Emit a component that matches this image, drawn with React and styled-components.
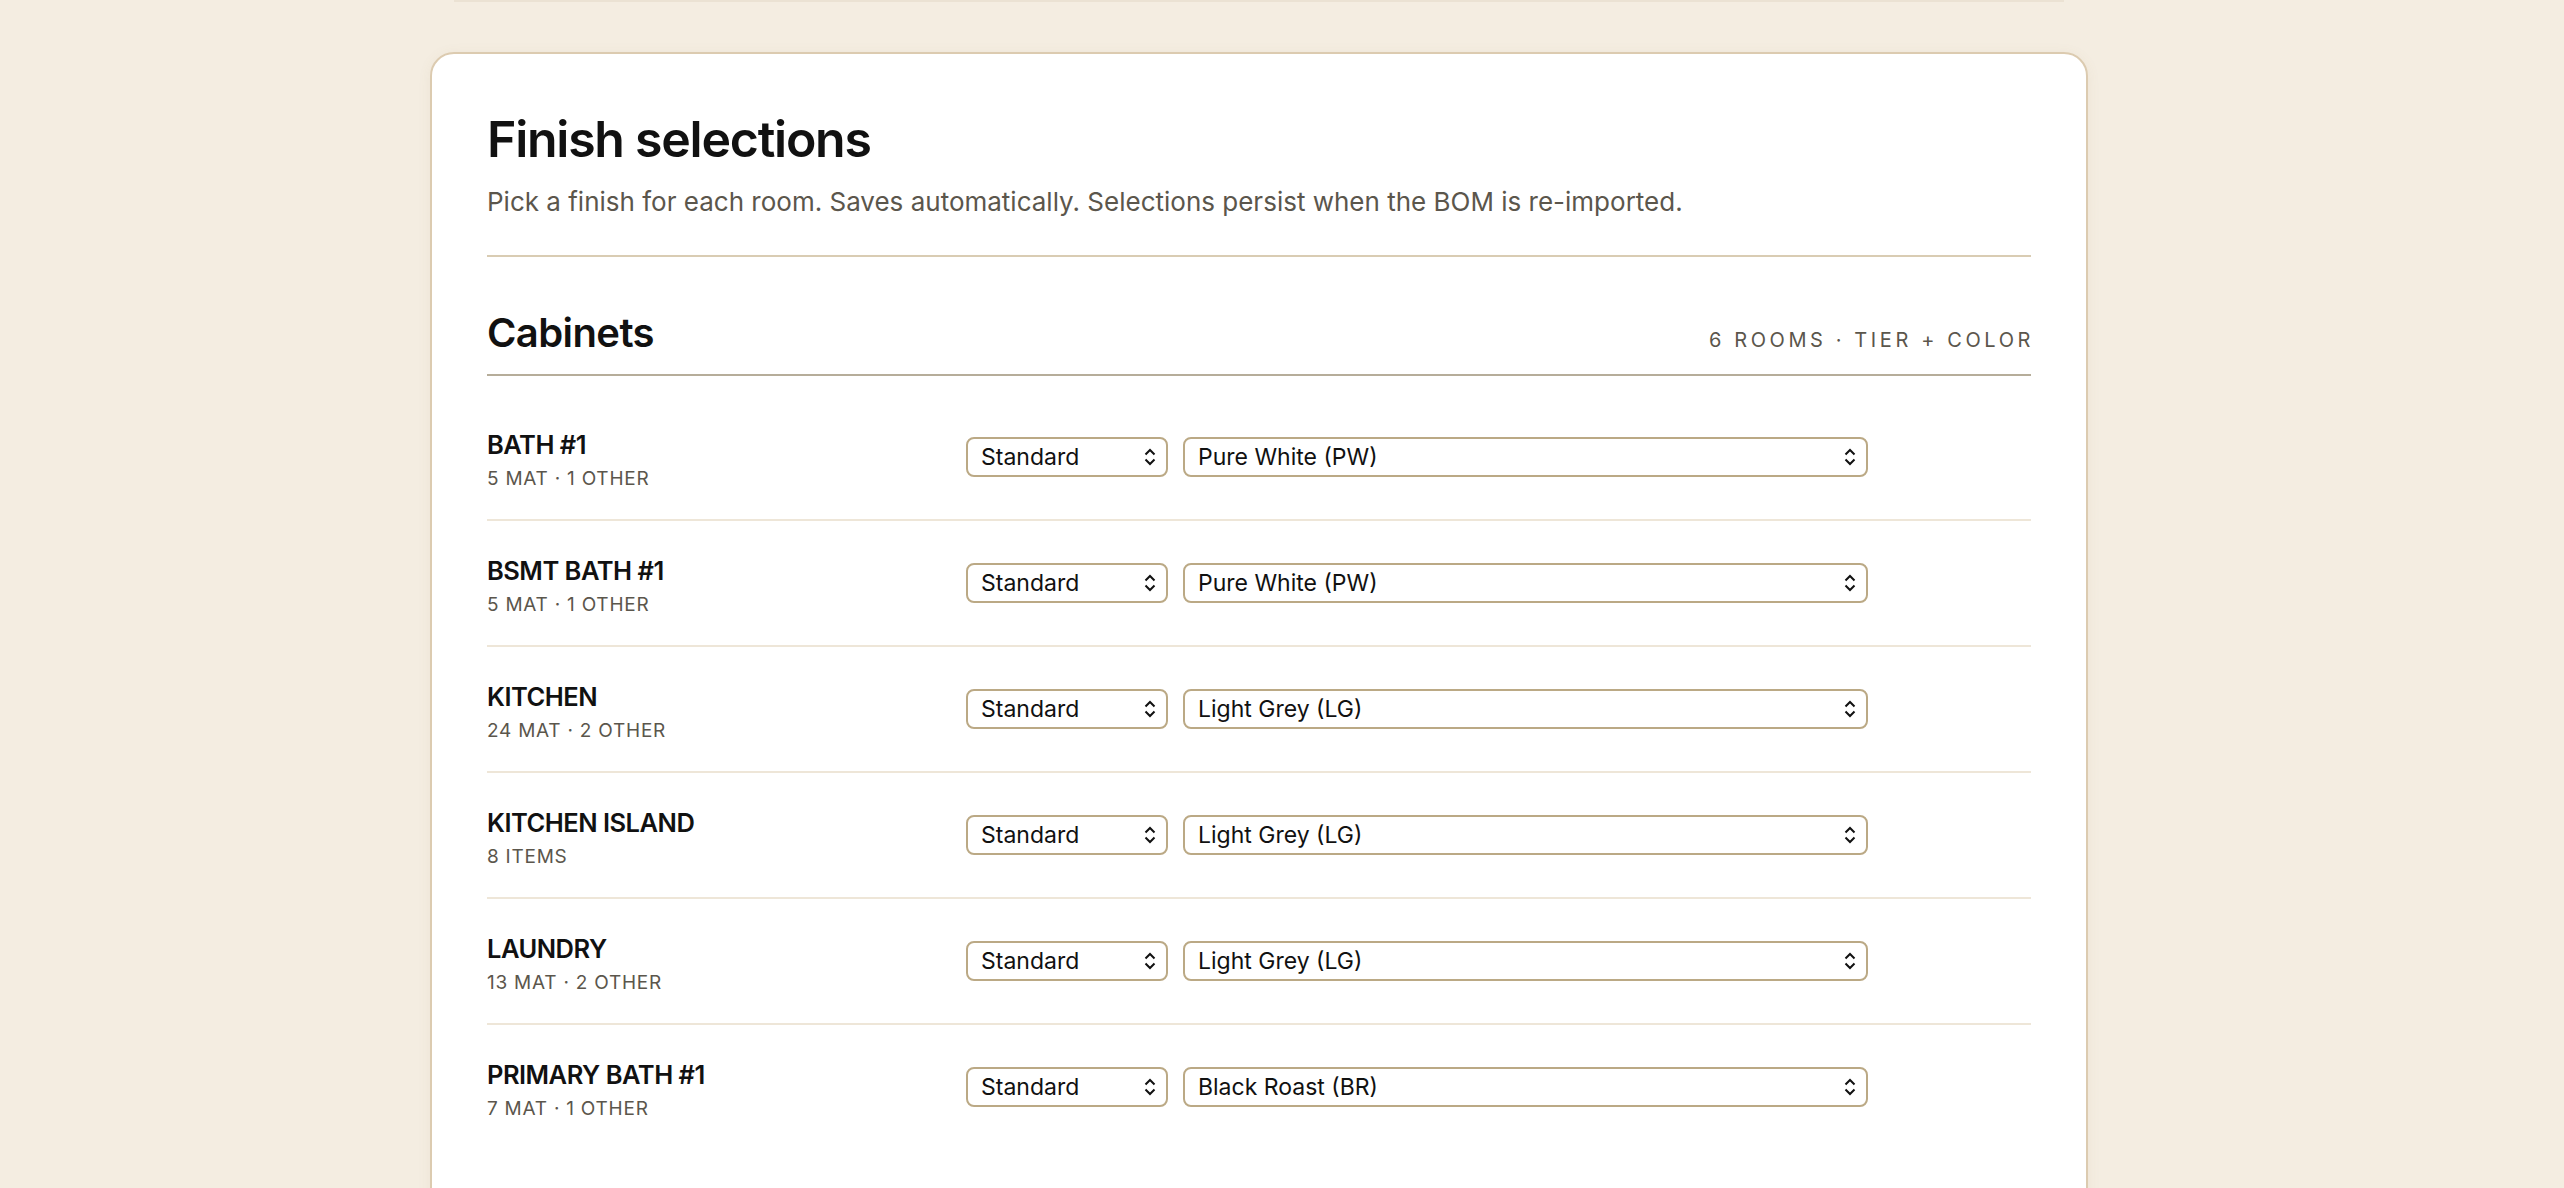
import styled, { createGlobalStyle } from "styled-components";

const GlobalStyle = createGlobalStyle`
  html, body {
    margin: 0;
    padding: 0;
    background: #f4ede1;
    font-family: Inter, "Noto Sans", sans-serif;
    color: #111;
  }
  * {
    box-sizing: border-box;
  }
`;

const Page = styled.main`
  display: flex;
  flex-direction: column;
  gap: 50px;
  padding-left: 430px;
  min-height: 1188px;
`;

// bottom edge of the section above, scrolled mostly out of view
const PrevCardEdge = styled.div`
  width: 1610px;
  height: 2px;
  margin-left: 24px;
  background: #ebe2d3;
`;

const Card = styled.section`
  width: 1658px;
  background: #fff;
  border: 2px solid #dccbb0;
  border-radius: 24px;
  box-shadow: 0 2px 14px rgba(140, 115, 70, 0.07);
  padding: 58px 55px 120px;
`;

const Header = styled.header`
  padding-bottom: 36px;
  border-bottom: 2px solid #d9ccb3;
`;

const Title = styled.h1`
  margin: 0 0 17px;
  font-size: 50px;
  line-height: 1.1;
  font-weight: 600;
  letter-spacing: -0.025em;
`;

const Lead = styled.p`
  margin: 0;
  font-size: 26px;
  line-height: 1.35;
  color: #5b564c;
`;

const SectionHead = styled.div`
  display: flex;
  align-items: baseline;
  justify-content: space-between;
  margin-top: 52px;
  padding-bottom: 17px;
  border-bottom: 2px solid #b6ad9a;
`;

const SectionTitle = styled.h2`
  margin: 0;
  font-size: 40px;
  line-height: 1.2;
  font-weight: 600;
  letter-spacing: -0.015em;
`;

const SectionMeta = styled.span`
  font-size: 20px;
  letter-spacing: 0.18em;
  color: #5b564c;
  margin-right: -3px;
`;

const RoomList = styled.ul`
  list-style: none;
  margin: 19px 0 0;
  padding: 0;
`;

const Row = styled.li`
  display: grid;
  grid-template-columns: 479px auto;
  align-items: center;
  padding: 28px 0 28px;
  border-bottom: 2px solid #eee6d8;

  &:last-child {
    border-bottom: none;
  }
`;

const RoomInfo = styled.div`
  display: flex;
  flex-direction: column;
  gap: 7px;
  padding-top: 7px;
`;

const RoomName = styled.span`
  font-size: 25.5px;
  line-height: 30px;
  font-weight: 600;
  letter-spacing: -0.02em;
`;

const RoomMeta = styled.span`
  font-size: 19px;
  line-height: 24px;
  letter-spacing: 0.04em;
  color: #5b564c;
`;

const Controls = styled.div`
  display: flex;
  gap: 15px;
`;

const SelectWrap = styled.div`
  position: relative;
  width: ${(p) => p.$width}px;

  svg {
    position: absolute;
    right: 12px;
    top: 50%;
    transform: translateY(-50%);
    pointer-events: none;
  }
`;

const Select = styled.select`
  appearance: none;
  width: 100%;
  height: 40px;
  padding: 0 36px 0 13px;
  border: 2px solid #bba985;
  border-radius: 8px;
  background: #fff;
  font-family: Inter, "Noto Sans", sans-serif;
  font-size: 23px;
  color: #111;
  outline: none;
`;

const Chevrons = () => (
  <svg width="12" height="18" viewBox="0 0 12 18" fill="none">
    <path d="M1.5 6.5 L6 2 L10.5 6.5" stroke="#111" strokeWidth="2" />
    <path d="M1.5 11.5 L6 16 L10.5 11.5" stroke="#111" strokeWidth="2" />
  </svg>
);

const tiers = ["Standard", "Premium", "Custom"];
const colors = [
  "Pure White (PW)",
  "Light Grey (LG)",
  "Black Roast (BR)",
];

const rooms = [
  { name: "BATH #1", meta: "5 MAT · 1 OTHER", color: "Pure White (PW)" },
  { name: "BSMT BATH #1", meta: "5 MAT · 1 OTHER", color: "Pure White (PW)" },
  { name: "KITCHEN", meta: "24 MAT · 2 OTHER", color: "Light Grey (LG)" },
  { name: "KITCHEN ISLAND", meta: "8 ITEMS", color: "Light Grey (LG)" },
  { name: "LAUNDRY", meta: "13 MAT · 2 OTHER", color: "Light Grey (LG)" },
  { name: "PRIMARY BATH #1", meta: "7 MAT · 1 OTHER", color: "Black Roast (BR)" },
];

const Picker = ({ width, value, options }) => (
  <SelectWrap $width={width}>
    <Select defaultValue={value}>
      {options.map((o) => (
        <option key={o}>{o}</option>
      ))}
    </Select>
    <Chevrons />
  </SelectWrap>
);

export default function App() {
  return (
    <>
      <GlobalStyle />
      <Page>
        <PrevCardEdge />
        <Card>
          <Header>
            <Title>Finish selections</Title>
            <Lead>
              Pick a finish for each room. Saves automatically. Selections
              persist when the BOM is re-imported.
            </Lead>
          </Header>

          <SectionHead>
            <SectionTitle>Cabinets</SectionTitle>
            <SectionMeta>6 ROOMS · TIER + COLOR</SectionMeta>
          </SectionHead>

          <RoomList>
            {rooms.map((r) => (
              <Row key={r.name}>
                <RoomInfo>
                  <RoomName>{r.name}</RoomName>
                  <RoomMeta>{r.meta}</RoomMeta>
                </RoomInfo>
                <Controls>
                  <Picker width={202} value="Standard" options={tiers} />
                  <Picker width={685} value={r.color} options={colors} />
                </Controls>
              </Row>
            ))}
          </RoomList>
        </Card>
      </Page>
    </>
  );
}
